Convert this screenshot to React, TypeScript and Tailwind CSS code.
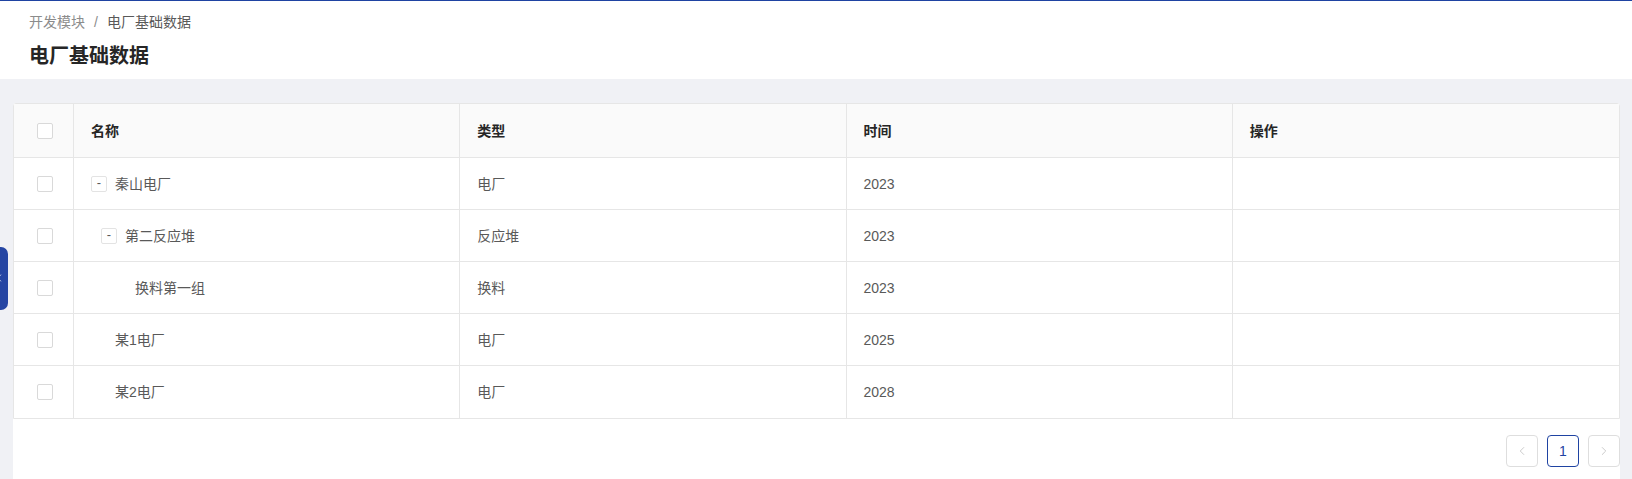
import { ChevronLeft, ChevronRight } from "lucide-react";

type Row = {
  name: string;
  type: string;
  time: string;
  level: number;
  expandable: boolean;
};

const rows: Row[] = [
  { name: "秦山电厂", type: "电厂", time: "2023", level: 0, expandable: true },
  { name: "第二反应堆", type: "反应堆", time: "2023", level: 1, expandable: true },
  { name: "换料第一组", type: "换料", time: "2023", level: 2, expandable: false },
  { name: "某1电厂", type: "电厂", time: "2025", level: 0, expandable: false },
  { name: "某2电厂", type: "电厂", time: "2028", level: 0, expandable: false },
];

const Checkbox = () => (
  <span className="block w-4 h-4 rounded-[2px] border border-[#d9d9d9] bg-white" />
);

const indents = ["pl-0", "pl-[10px]", "pl-[20px]"];

export default function App() {
  return (
    <div
      className="relative w-full h-[479px] overflow-hidden bg-[#f0f1f5]"
      style={{ fontFamily: '"Liberation Sans", "Noto Sans CJK SC", sans-serif' }}
    >
      {/* page header */}
      <div className="bg-white border-t border-[#1f43a2] h-[79px] pl-[29px] pt-[11px]">
        <div className="flex items-center text-sm leading-5 text-[#8c8c8c]">
          <span>开发模块</span>
          <span className="mx-[9px]">/</span>
          <span className="text-[#595959]">电厂基础数据</span>
        </div>
        <h1 className="mt-[10px] text-[20px] leading-7 font-bold text-[#262626]">
          电厂基础数据
        </h1>
      </div>

      <div className="pl-[13px] pr-[12px] pt-[24px]">
        <div className="bg-white rounded-[3px] h-[400px]">
          <div className="border border-[#e6e6e6] rounded-t-[3px] text-sm">
            <div className="grid grid-cols-[60px_1fr_1fr_1fr_1fr] h-[54px] bg-[#fafafa] border-b border-[#e6e6e6] font-semibold text-[#262626]">
              <div className="flex items-center justify-center border-r border-[#e6e6e6] pl-[2px]">
                <Checkbox />
              </div>
              <div className="flex items-center pl-[17px] border-r border-[#e6e6e6]">名称</div>
              <div className="flex items-center pl-[17px] border-r border-[#e6e6e6]">类型</div>
              <div className="flex items-center pl-[17px] border-r border-[#e6e6e6]">时间</div>
              <div className="flex items-center pl-[17px]">操作</div>
            </div>
            {rows.map((r, i) => (
              <div
                key={i}
                className={
                  "grid grid-cols-[60px_1fr_1fr_1fr_1fr] h-[52px] text-[#595959] " +
                  (i < rows.length - 1 ? "border-b border-[#e6e6e6]" : "")
                }
              >
                <div className="flex items-center justify-center border-r border-[#e6e6e6] pl-[2px]">
                  <Checkbox />
                </div>
                <div className="flex items-center pl-[17px] border-r border-[#e6e6e6]">
                  <div className={"flex items-center gap-2 " + indents[r.level]}>
                    {r.expandable ? (
                      <span className="flex items-center justify-center w-4 h-4 rounded-[2px] border border-[#e3e3e3] text-[13px] leading-none text-[#595959] pb-[2px]">
                        -
                      </span>
                    ) : (
                      <span className="w-4 h-4" />
                    )}
                    <span>{r.name}</span>
                  </div>
                </div>
                <div className="flex items-center pl-[17px] border-r border-[#e6e6e6]">{r.type}</div>
                <div className="flex items-center pl-[17px] border-r border-[#e6e6e6]">{r.time}</div>
                <div className="flex items-center pl-[17px]"></div>
              </div>
            ))}
          </div>

          {/* pagination */}
          <div className="flex justify-end gap-[9px] mt-4">
            <button className="flex items-center justify-center w-8 h-8 rounded border border-[#dedede] text-[#c4c4c4]">
              <ChevronLeft size={14} strokeWidth={1.5} />
            </button>
            <button className="flex items-center justify-center w-8 h-8 rounded border border-[#1f43a2] text-[#1f43a2] text-sm">
              1
            </button>
            <button className="flex items-center justify-center w-8 h-8 rounded border border-[#dedede] text-[#c4c4c4]">
              <ChevronRight size={14} strokeWidth={1.5} />
            </button>
          </div>
        </div>
      </div>

      {/* side collapse tab */}
      <div className="absolute left-0 top-[247px] w-2 h-[63px] bg-[#2545a3] rounded-r-[7px] overflow-hidden">
        <ChevronLeft size={12} strokeWidth={2} className="absolute -left-[7px] top-[25px] text-white" />
      </div>
    </div>
  );
}
